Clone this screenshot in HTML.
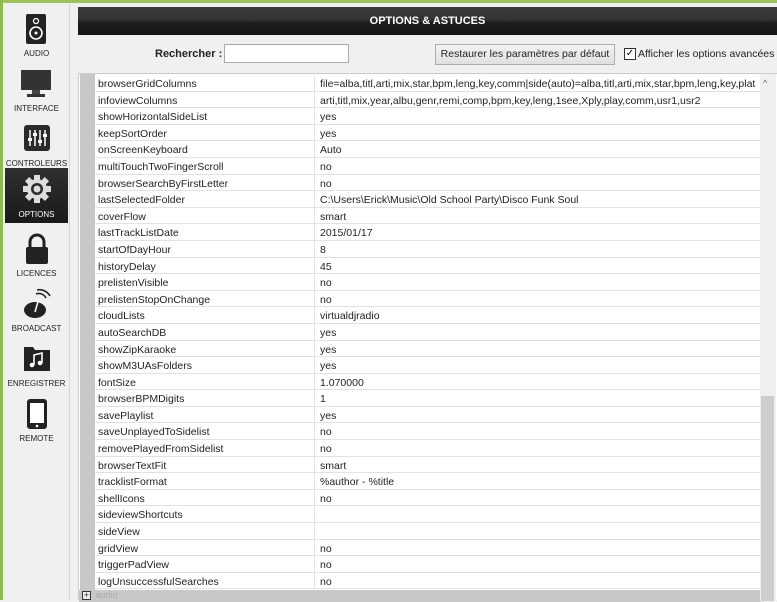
<!DOCTYPE html>
<html><head><meta charset="utf-8">
<style>
*{box-sizing:border-box;margin:0;padding:0}
body{width:777px;height:600px;overflow:hidden;background:#f0f0f0;font-family:"Liberation Sans",Arial,sans-serif;position:relative}
.gl{position:absolute;left:0;top:0;width:3px;height:600px;background:#8fba4e}
.gt{position:absolute;left:0;top:0;width:777px;height:3px;background:#9fc25e}
.side{position:absolute;left:3px;top:3px;width:67px;height:597px;background:#f0f0f0;border-right:1px solid #d6d6d6}
.it{position:absolute;left:2px;width:63px;height:55px;text-align:center;font-size:8px;color:#222}
.it .lb{position:absolute;left:0;right:0;bottom:4px}
.it.sel{background:linear-gradient(#2f2f2f,#1a1a1a);color:#fff}
.it svg{position:absolute;left:19px;top:6px}
.hdr{position:absolute;left:78px;top:7px;width:699px;height:28px;background:linear-gradient(#3c3c3c 0,#333 45%,#1c1c1c 55%,#161616);color:#fff;font-weight:bold;font-size:11px;text-align:center;line-height:28px}
.rl{position:absolute;left:155px;top:48px;font-size:11px;font-weight:bold;color:#222}
.inp{position:absolute;left:224px;top:44px;width:125px;height:19px;background:#fff;border:1px solid #aaa}
.btn{position:absolute;left:435px;top:44px;width:180px;height:21px;background:linear-gradient(#f4f4f4,#e0e0e0);border:1px solid #adadad;font-size:10.5px;color:#222;text-align:center;line-height:19px;white-space:nowrap;overflow:hidden}
.cb{position:absolute;left:624px;top:48px;width:12px;height:12px;border:1px solid #333;background:#fff;font-size:10px;line-height:10px;text-align:center}
.cl{position:absolute;left:638px;top:48px;font-size:10.5px;color:#222;white-space:nowrap}
.tbl{position:absolute;left:78px;top:73px;width:699px;height:527px;background:#fff;border-top:1px solid #ccc;border-left:1px solid #ccc}
.gc{position:absolute;left:1px;top:0;width:15px;height:527px;background:#c8c8c8}
.rows{position:absolute;left:16px;top:1px;width:666px}
.r{height:16.6px;border-bottom:1.5px solid #e2e2e2;font-size:10.5px;color:#222;line-height:18px;position:relative;white-space:nowrap;overflow:hidden}
.r .n{position:absolute;left:3px;top:0}
.r .v{position:absolute;left:219px;top:0;padding-left:5px;border-left:1px solid #e2e2e2;height:16px;width:447px}
.sb{position:absolute;left:681px;top:0;width:16px;height:527px;background:#f0f0f0}
.th{position:absolute;left:1px;top:322px;width:13px;height:205px;background:#cdcdcd}
.ft{position:absolute;left:0;top:516px;width:682px;height:12px;background:#c8c8c8;font-size:9px;color:#aaa}
</style></head><body>
<div class="gt"></div><div class="gl"></div>
<div class="side">
 <div class="it" style="top:4px"><svg width="24" height="32" viewBox="0 0 24 32"><rect x="2" y="1" width="20" height="30" rx="2" fill="#222"/><circle cx="12" cy="8" r="2.5" fill="none" stroke="#fff" stroke-width="1.3"/><circle cx="12" cy="20" r="6" fill="none" stroke="#fff" stroke-width="1.6"/><circle cx="12" cy="20" r="1.5" fill="#fff"/></svg><div class="lb">AUDIO</div></div>
 <div class="it" style="top:59px"><svg width="30" height="32" viewBox="0 0 30 32" style="left:16px"><rect x="0" y="2" width="30" height="20" fill="#333"/><rect x="11" y="22" width="8" height="4" fill="#444"/><rect x="6" y="26" width="18" height="3" fill="#333"/></svg><div class="lb">INTERFACE</div></div>
 <div class="it" style="top:114px"><svg width="26" height="30" viewBox="0 0 26 30"><rect x="0" y="2" width="26" height="26" rx="3" fill="#2a2a2a"/><g stroke="#fff" stroke-width="1.5"><line x1="6" y1="7" x2="6" y2="23"/><line x1="11" y1="7" x2="11" y2="23"/><line x1="16" y1="7" x2="16" y2="23"/><line x1="21" y1="7" x2="21" y2="23"/></g><g fill="#fff"><rect x="4" y="15" width="4" height="3"/><rect x="9" y="10" width="4" height="3"/><rect x="14" y="17" width="4" height="3"/><rect x="19" y="11" width="4" height="3"/></g></svg><div class="lb">CONTROLEURS</div></div>
 <div class="it sel" style="top:165px"><svg width="30" height="30" viewBox="0 0 30 30" style="left:17px"><g fill="#ddd"><circle cx="15" cy="15" r="10"/><g><rect x="12" y="1" width="6" height="28"/><rect x="1" y="12" width="28" height="6"/><rect x="12" y="1" width="6" height="28" transform="rotate(45 15 15)"/><rect x="12" y="1" width="6" height="28" transform="rotate(-45 15 15)"/></g></g><circle cx="15" cy="15" r="6" fill="#2a2a2a"/><circle cx="15" cy="15" r="3.5" fill="#ddd"/></svg><div class="lb">OPTIONS</div></div>
 <div class="it" style="top:224px"><svg width="26" height="32" viewBox="0 0 26 32"><path d="M6 14V9a7 7 0 0 1 14 0v5" fill="none" stroke="#222" stroke-width="3"/><rect x="2" y="14" width="22" height="17" rx="2" fill="#222"/></svg><div class="lb">LICENCES</div></div>
 <div class="it" style="top:279px"><svg width="30" height="32" viewBox="0 0 30 32" style="left:17px"><ellipse cx="13" cy="22" rx="11" ry="8" fill="#222"/><line x1="13" y1="24" x2="17" y2="10" stroke="#fff" stroke-width="1.5"/><path d="M14 6a8 8 0 0 1 10 4M15 2a12 12 0 0 1 13 6" fill="none" stroke="#222" stroke-width="1.6"/></svg><div class="lb">BROADCAST</div></div>
 <div class="it" style="top:334px"><svg width="28" height="30" viewBox="0 0 28 30" style="left:18px"><path d="M1 4h9l2 3h15v21H1z" fill="#222"/><path d="M11 22V12l8-2v10" fill="none" stroke="#fff" stroke-width="1.6"/><circle cx="9" cy="22" r="2.3" fill="#fff"/><circle cx="17" cy="20" r="2.3" fill="#fff"/></svg><div class="lb">ENREGISTRER</div></div>
 <div class="it" style="top:389px"><svg width="24" height="32" viewBox="0 0 24 32" style="left:20px"><rect x="2" y="1" width="20" height="30" rx="3" fill="#222"/><rect x="5" y="5" width="14" height="20" fill="#fff"/><circle cx="12" cy="28" r="1.3" fill="#fff"/></svg><div class="lb">REMOTE</div></div>
</div>
<div class="hdr">OPTIONS &amp; ASTUCES</div>
<div class="rl">Rechercher :</div><div class="inp"></div>
<div class="btn">Restaurer les paramètres par défaut</div>
<div class="cb">✓</div><div class="cl">Afficher les options avancées</div>
<div class="tbl">
<div class="gc"></div>
<div class="rows">
<div class="r"><span class="n">browserGridColumns</span><span class="v">file=alba,titl,arti,mix,star,bpm,leng,key,comm|side(auto)=alba,titl,arti,mix,star,bpm,leng,key,plat</span></div>
<div class="r"><span class="n">infoviewColumns</span><span class="v">arti,titl,mix,year,albu,genr,remi,comp,bpm,key,leng,1see,Xply,play,comm,usr1,usr2</span></div>
<div class="r"><span class="n">showHorizontalSideList</span><span class="v">yes</span></div>
<div class="r"><span class="n">keepSortOrder</span><span class="v">yes</span></div>
<div class="r"><span class="n">onScreenKeyboard</span><span class="v">Auto</span></div>
<div class="r"><span class="n">multiTouchTwoFingerScroll</span><span class="v">no</span></div>
<div class="r"><span class="n">browserSearchByFirstLetter</span><span class="v">no</span></div>
<div class="r"><span class="n">lastSelectedFolder</span><span class="v">C:\Users\Erick\Music\Old School Party\Disco Funk Soul</span></div>
<div class="r"><span class="n">coverFlow</span><span class="v">smart</span></div>
<div class="r"><span class="n">lastTrackListDate</span><span class="v">2015/01/17</span></div>
<div class="r"><span class="n">startOfDayHour</span><span class="v">8</span></div>
<div class="r"><span class="n">historyDelay</span><span class="v">45</span></div>
<div class="r"><span class="n">prelistenVisible</span><span class="v">no</span></div>
<div class="r"><span class="n">prelistenStopOnChange</span><span class="v">no</span></div>
<div class="r"><span class="n">cloudLists</span><span class="v">virtualdjradio</span></div>
<div class="r"><span class="n">autoSearchDB</span><span class="v">yes</span></div>
<div class="r"><span class="n">showZipKaraoke</span><span class="v">yes</span></div>
<div class="r"><span class="n">showM3UAsFolders</span><span class="v">yes</span></div>
<div class="r"><span class="n">fontSize</span><span class="v">1.070000</span></div>
<div class="r"><span class="n">browserBPMDigits</span><span class="v">1</span></div>
<div class="r"><span class="n">savePlaylist</span><span class="v">yes</span></div>
<div class="r"><span class="n">saveUnplayedToSidelist</span><span class="v">no</span></div>
<div class="r"><span class="n">removePlayedFromSidelist</span><span class="v">no</span></div>
<div class="r"><span class="n">browserTextFit</span><span class="v">smart</span></div>
<div class="r"><span class="n">tracklistFormat</span><span class="v">%author - %title</span></div>
<div class="r"><span class="n">shellIcons</span><span class="v">no</span></div>
<div class="r"><span class="n">sideviewShortcuts</span><span class="v"></span></div>
<div class="r"><span class="n">sideView</span><span class="v"></span></div>
<div class="r"><span class="n">gridView</span><span class="v">no</span></div>
<div class="r"><span class="n">triggerPadView</span><span class="v">no</span></div>
<div class="r"><span class="n">logUnsuccessfulSearches</span><span class="v">no</span></div>
</div>
<div class="ft"><span style="display:inline-block;width:9px;height:9px;border:1px solid #333;margin:1px 2px 0 3px;font-size:9px;line-height:7px;color:#333;text-align:center;background:#eee">+</span> audio</div>
<div class="sb"><div style="position:absolute;left:3px;top:4px;font-size:9px;color:#666">^</div><div class="th"></div></div>
</div>
</body></html>
